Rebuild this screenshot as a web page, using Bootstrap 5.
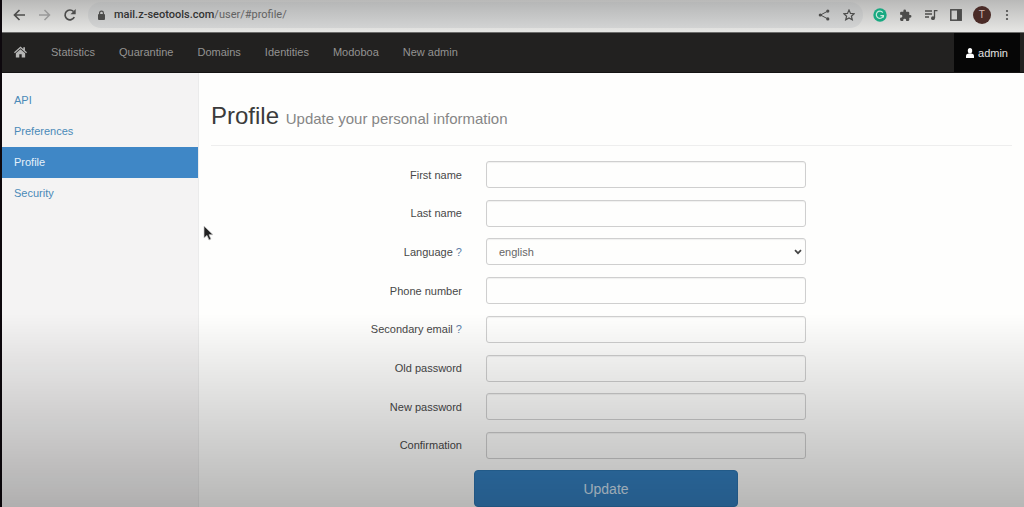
<!DOCTYPE html>
<html lang="en">
<head>
<meta charset="utf-8">
<meta name="viewport" content="width=device-width, initial-scale=1">
<title>Profile</title>
<link href="https://cdn.jsdelivr.net/npm/bootstrap@5.3.0/dist/css/bootstrap.min.css" rel="stylesheet">
<style>
  body { font-family: "Liberation Sans", Arial, sans-serif; font-size: 11px; line-height: 16px; color: #444; background: #fefefd; border-left: 2px solid #0d080d; }
  a { text-decoration: none; }
  svg { display: block; }

  /* Browser toolbar */
  .chrome-bar { height: 32px; padding: 0 4px 2px 5px; background: linear-gradient(#b9b9b8, #e6e6e4); color: #4c4c4b; }
  .tool-btn { width: 25px; height: 28px; padding: 0; border: 0; background: none; color: inherit; display: flex; align-items: center; justify-content: center; }
  .tool-btn.dim { color: #999; }
  .address { height: 26px; border-radius: 13px; background: linear-gradient(#b6b7b7, #d2d3d3); padding: 0 2px 0 9px; margin-left: 6px; }
  .address-text { font: 11px/16px Roboto, "Noto Sans", sans-serif; color: #626262; }
  .address-text b { font-weight: 500; color: #333; }
  .extensions { width: 153px; margin-left: 4px; }
  .avatar { width: 18px; height: 18px; border-radius: 50%; background: #4a2b27; color: #d3bab5; font-size: 10px; line-height: 18px; }

  /* Application menu */
  .app-nav { height: 41px; padding: 0 4px 0 0; background: #222120; border-top: 1px solid #6c6c6b; border-bottom: 1px solid #151414; }
  .app-nav .nav-link { padding: 11px 12px; color: #949392; line-height: 16px; }
  .app-nav .nav-link.user { background: #060606; color: #e2e2e1; }

  /* Sidebar */
  .side { width: 197px; flex: none; background: #f4f3f3; border-right: 1px solid #ebebeb; padding-top: 12px; }
  .side .nav-link { color: #4a8ab8; padding: 7px 12px 8px; border-radius: 0; }
  .side .nav-link.active { background: #3f87c6; color: #e6f1fa; }

  /* Profile form */
  .page-title { font-size: 24px; line-height: 28px; font-weight: 400; color: #3b3b3b; margin: 0 12px 15px; padding: 29px 0 12px; border-bottom: 1px solid #eee; }
  .page-title small { font-size: 15px; color: #868686; }
  .fields { height: 298px; align-content: space-between; }
  .fields .row > * { padding: 0 12px; }
  .fields label { color: #484848; }
  .fields a { color: #5d7fa8; }
  .field { height: 27px; min-height: 27px; padding: 4px 12px; font-size: 11px; line-height: 16px; border: 1px solid #cfcfcf; border-radius: 3px; color: #666; background-color: transparent; box-shadow: inset 0 1px 1px rgba(0, 0, 0, .06); }
  select.field { background: url("data:image/svg+xml,%3Csvg xmlns='http://www.w3.org/2000/svg' viewBox='0 0 8 6'%3E%3Cpath d='M1 1.2l3 3 3-3' fill='none' stroke='%23444' stroke-width='1.7'/%3E%3C/svg%3E") no-repeat right 3px center / 8px 6px; }
  .update-btn { width: 32%; height: 37px; margin-top: 11px; padding: 0; font-size: 14px; line-height: 20px; border-radius: 4px; color: #d3e4f3; background: #347fbf; border: 1px solid #2d75b1; }

  /* Darkening at the foot of the window */
  .shade { position: fixed; left: 0; right: 0; bottom: 0; height: 38vh; pointer-events: none; background: linear-gradient(rgba(0, 0, 0, 0), rgba(0, 0, 0, .28)); }
  .pointer { position: absolute; left: 200px; top: 225px; }
</style>
</head>
<body class="d-flex flex-column min-vh-100 position-relative">

<header class="chrome-bar d-flex align-items-center">
  <button class="tool-btn" aria-label="Back"><svg width="13" height="12" viewBox="0 0 13 12" fill="none" stroke="currentColor" stroke-width="1.7"><path d="M12 6H1.5M6.5 1l-5 5 5 5"/></svg></button>
  <button class="tool-btn dim" aria-label="Forward"><svg width="13" height="12" viewBox="0 0 13 12" fill="none" stroke="currentColor" stroke-width="1.5"><path d="M1 6h10.5M6.500 1l5 5-5 5"/></svg></button>
  <button class="tool-btn" aria-label="Reload"><svg width="14" height="14" viewBox="0 0 14 14"><path d="M11.300 9.200A4.900 4.900 0 1 1 10.500 3.500" fill="none" stroke="currentColor" stroke-width="1.700"/><path d="M12.700 1v5.200H7.500z" fill="currentColor"/></svg></button>
  <div class="address d-flex align-items-center flex-fill">
    <svg width="9" height="11" viewBox="0 0 9 11"><rect x="1" y="4" width="7" height="6" rx="1" fill="currentColor"/><path d="M2.600 4.500V3a1.900 1.900 0 0 1 3.800 0v1.500" fill="none" stroke="currentColor" stroke-width="1.200"/></svg>
    <a class="address-text flex-fill ms-2" href="#profile"><b>mail.z-seotools.com</b>/user/#profile/</a>
    <button class="tool-btn" aria-label="Share"><svg width="12" height="12" viewBox="0 0 12 12" fill="currentColor"><path d="M10 2L2.500 6 10 10" fill="none" stroke="currentColor"/><circle cx="9.800" cy="2.100" r="1.600"/><circle cx="2.300" cy="6" r="1.600"/><circle cx="9.800" cy="9.900" r="1.600"/></svg></button>
    <button class="tool-btn" aria-label="Bookmark"><svg width="12" height="12" viewBox="0 0 12 12" fill="none" stroke="currentColor" stroke-width="1.200"><path d="M6 1l1.500 3.400 3.700.300-2.800 2.500.900 3.600L6 8.900l-3.300 1.900.900-3.600L.800 4.700l3.700-.300z"/></svg></button>
  </div>
  <div class="extensions d-flex justify-content-between">
    <button class="tool-btn" aria-label="Grammar"><svg width="14" height="14" viewBox="0 0 14 14"><circle cx="7" cy="7" r="6.700" fill="#18a981"/><path d="M9.800 4.600A3.600 3.600 0 1 0 10.400 7.600H7.400M10.400 7.600v2" fill="none" stroke="#c7e9dd" stroke-width="1.200"/></svg></button>
    <button class="tool-btn" aria-label="Extensions"><svg width="13" height="13" viewBox="0 0 24 24" fill="currentColor"><path d="M20.500 11H19V7a2 2 0 0 0-2-2h-4V3.500a2.500 2.500 0 0 0-5 0V5H4a2 2 0 0 0-2 2v3.800h1.500a2.700 2.700 0 0 1 0 5.400H2V20a2 2 0 0 0 2 2h3.800v-1.500a2.700 2.700 0 0 1 5.400 0V22H17a2 2 0 0 0 2-2v-4h1.500a2.500 2.500 0 0 0 0-5z"/></svg></button>
    <button class="tool-btn" aria-label="Media"><svg width="14" height="12" viewBox="0 0 14 12" fill="none" stroke="currentColor" stroke-width="1.300"><path d="M1 2h7M1 5h7M1 8h4M10.500 9V1.700H13.500"/><ellipse cx="9" cy="9.200" rx="1.300" ry="1.200" fill="currentColor"/></svg></button>
    <button class="tool-btn" aria-label="Side panel"><svg width="12" height="12" viewBox="0 0 12 12"><rect x=".8" y=".8" width="10.400" height="10.400" fill="none" stroke="currentColor" stroke-width="1.500"/><path d="M7 1h4v10H7z" fill="currentColor"/></svg></button>
    <button class="tool-btn" aria-label="Account"><span class="avatar">T</span></button>
    <button class="tool-btn" aria-label="Menu"><svg width="4" height="12" viewBox="0 0 4 12" fill="currentColor"><circle cx="2" cy="2" r="1.100"/><circle cx="2" cy="6" r="1.100"/><circle cx="2" cy="10" r="1.100"/></svg></button>
  </div>
</header>

<nav class="app-nav d-flex justify-content-between" aria-label="Main">
  <ul class="nav flex-nowrap">
    <li class="nav-item"><a class="nav-link" href="#home" aria-label="Home"><svg width="13" height="16" viewBox="0 0 14 16" fill="#b5b5b4"><path d="M7 2L0 8.300l.9 1L7 3.900l6.100 5.400.9-1-2.200-2V3H10v1.700z"/><path d="M7 5L2 9.400V14h3.700v-3.500h2.600V14H12V9.400z"/></svg></a></li>
    <li class="nav-item"><a class="nav-link" href="#statistics">Statistics</a></li>
    <li class="nav-item"><a class="nav-link" href="#quarantine">Quarantine</a></li>
    <li class="nav-item"><a class="nav-link" href="#domains">Domains</a></li>
    <li class="nav-item"><a class="nav-link" href="#identities">Identities</a></li>
    <li class="nav-item"><a class="nav-link" href="#modoboa">Modoboa</a></li>
    <li class="nav-item"><a class="nav-link" href="#new-admin">New admin</a></li>
  </ul>
  <a class="nav-link user d-flex align-items-center" href="#admin"><svg class="me-1" width="8" height="10" viewBox="0 0 8 10" fill="#fff"><ellipse cx="4" cy="2.700" rx="2.200" ry="2.700"/><path d="M0 10V7.500Q0 6 2.500 5.500h3Q8 6 8 7.500V10z"/></svg>admin</a>
</nav>

<div class="d-flex flex-fill">
  <aside class="side">
    <ul class="nav nav-pills flex-column">
      <li class="nav-item"><a class="nav-link" href="#api">API</a></li>
      <li class="nav-item"><a class="nav-link" href="#preferences">Preferences</a></li>
      <li class="nav-item"><a class="nav-link active" href="#profile">Profile</a></li>
      <li class="nav-item"><a class="nav-link" href="#security">Security</a></li>
    </ul>
  </aside>

  <main class="flex-fill">
    <h1 class="page-title">Profile <small>Update your personal information</small></h1>
    <form>
      <div class="fields d-grid">
        <div class="row g-0 align-items-center"><label class="col-4 text-end" for="first">First name</label><div class="col-5"><input class="form-control field" id="first" type="text"></div></div>
        <div class="row g-0 align-items-center"><label class="col-4 text-end" for="last">Last name</label><div class="col-5"><input class="form-control field" id="last" type="text"></div></div>
        <div class="row g-0 align-items-center"><div class="col-4 text-end"><label for="language">Language</label> <a href="#language-help">?</a></div><div class="col-5"><select class="form-select field" id="language"><option>english</option></select></div></div>
        <div class="row g-0 align-items-center"><label class="col-4 text-end" for="phone">Phone number</label><div class="col-5"><input class="form-control field" id="phone" type="tel"></div></div>
        <div class="row g-0 align-items-center"><div class="col-4 text-end"><label for="email">Secondary email</label> <a href="#email-help">?</a></div><div class="col-5"><input class="form-control field" id="email" type="email"></div></div>
        <div class="row g-0 align-items-center"><label class="col-4 text-end" for="old">Old password</label><div class="col-5"><input class="form-control field" id="old" type="password"></div></div>
        <div class="row g-0 align-items-center"><label class="col-4 text-end" for="new">New password</label><div class="col-5"><input class="form-control field" id="new" type="password"></div></div>
        <div class="row g-0 align-items-center"><label class="col-4 text-end" for="confirm">Confirmation</label><div class="col-5"><input class="form-control field" id="confirm" type="password"></div></div>
      </div>
      <div class="row g-0"><button class="btn update-btn offset-4" type="submit">Update</button></div>
    </form>
  </main>
</div>

<div class="shade"></div>
<svg class="pointer" width="12" height="17" viewBox="0 0 12 17"><path d="M2 1v12l3-2.600 2 4.600 2-.9-2-4.400h4z" fill="#222" stroke="#ccc" stroke-width=".7"/></svg>

<script src="https://cdn.jsdelivr.net/npm/bootstrap@5.3.0/dist/js/bootstrap.bundle.min.js"></script>
</body>
</html>
